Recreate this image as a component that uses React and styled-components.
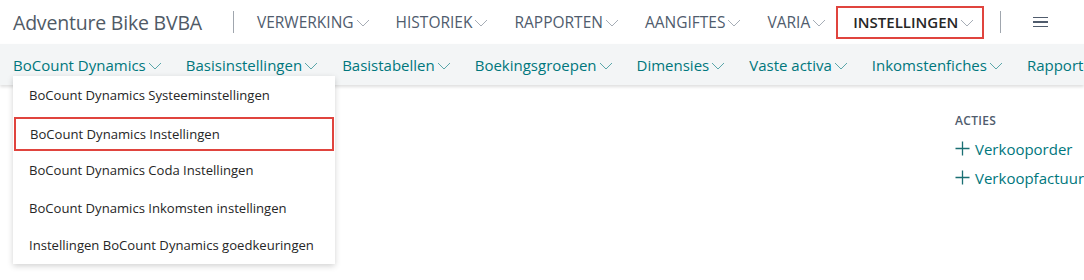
import React from 'react'
import styled, { createGlobalStyle } from 'styled-components'

const GlobalStyle = createGlobalStyle`
  body {
    margin: 0;
    background: #ffffff;
    font-family: "Open Sans", "Noto Sans", sans-serif;
    overflow: hidden;
  }
`

const Page = styled.div`
  position: relative;
  width: 1084px;
  height: 280px;
  overflow: hidden;
`

const TopBar = styled.div`
  height: 44px;
  display: flex;
  align-items: center;
  padding-left: 13px;
  background: #ffffff;
`

const Title = styled.div`
  font-size: 19.5px;
  color: #505a66;
  letter-spacing: -0.2px;
  white-space: nowrap;
`

const Divider = styled.div`
  width: 1px;
  height: 22px;
  background: #a0a6ae;
  margin: 0 ${p => p.$right}px 0 ${p => p.$left}px;
`

const TopItem = styled.div`
  display: flex;
  align-items: center;
  font-size: 15.5px;
  color: ${p => (p.$active ? '#262626' : '#505c6d')};
  font-weight: ${p => (p.$active ? 600 : 400)};
  white-space: nowrap;
  margin-right: 26px;
  ${p =>
    p.$active &&
    `
    border: 2px solid #e0443e;
    height: 33px;
    box-sizing: border-box;
    padding: 0 8px 0 15px;
    margin-left: -16px;
    margin-right: 0;
    font-size: 15px;
  `}
`

const Chevron = ({ color = '#a6adb6' }) => (
  <svg width="14" height="8" viewBox="0 0 14 8" style={{ marginLeft: 2, marginTop: 2 }}>
    <path d="M1 1 L7 7 L13 1" fill="none" stroke={color} strokeWidth="1" />
  </svg>
)

const Hamburger = styled.div`
  display: flex;
  flex-direction: column;
  gap: 3px;
  span {
    display: block;
    width: 15px;
    height: 1.5px;
    background: #505c6d;
  }
`

const SubBar = styled.div`
  height: 41px;
  display: flex;
  align-items: center;
  padding-left: 13px;
  background: #f3f5f6;
  box-shadow: 0 2px 3px rgba(0, 0, 0, 0.13);
  position: relative;
  z-index: 1;
`

const SubItem = styled.div`
  display: flex;
  align-items: center;
  font-size: 15px;
  color: #00777d;
  white-space: nowrap;
  margin-right: 24px;
`

const Content = styled.div`
  display: flex;
  padding: 27px 0 0 955px;
`

const Actions = styled.div`
  flex: 1;
  display: flex;
  flex-direction: column;
`

const ActionsTitle = styled.div`
  font-size: 12px;
  font-weight: 600;
  color: #505c6d;
  margin-bottom: 5px;
  letter-spacing: 0.3px;
`

const ActionLink = styled.div`
  display: flex;
  align-items: center;
  font-size: 15px;
  color: #00777d;
  height: 29px;
  white-space: nowrap;
`

const Plus = () => (
  <svg width="15" height="15" viewBox="0 0 15 15" style={{ marginRight: 5 }}>
    <path d="M7.5 0.5 V14.5 M0.5 7.5 H14.5" stroke="#1a6f73" strokeWidth="1.3" fill="none" />
  </svg>
)

const Dropdown = styled.div`
  position: absolute;
  left: 13px;
  top: 76px;
  width: 322px;
  background: #ffffff;
  box-shadow: 0 2px 6px rgba(0, 0, 0, 0.18);
  z-index: 5;
  display: flex;
  flex-direction: column;
`

const DropItem = styled.div`
  height: 37.6px;
  display: flex;
  align-items: center;
  padding-left: 16px;
  font-size: 13.1px;
  color: #262626;
  white-space: nowrap;
  box-sizing: border-box;
  ${p =>
    p.$highlight &&
    `
    border: 2px solid #e0443e;
    margin: 3px 1px 0 1px;
    padding-left: 14px;
    height: 34.6px;
  `}
`

const topMenu = ['VERWERKING', 'HISTORIEK', 'RAPPORTEN', 'AANGIFTES', 'VARIA']
const subMenu = [
  'BoCount Dynamics',
  'Basisinstellingen',
  'Basistabellen',
  'Boekingsgroepen',
  'Dimensies',
  'Vaste activa',
  'Inkomstenfiches',
  'Rapporten',
]
const dropItems = [
  'BoCount Dynamics Systeeminstellingen',
  'BoCount Dynamics Instellingen',
  'BoCount Dynamics Coda Instellingen',
  'BoCount Dynamics Inkomsten instellingen',
  'Instellingen BoCount Dynamics goedkeuringen',
]

export default function App() {
  return (
    <Page>
      <GlobalStyle />
      <TopBar>
        <Title>Adventure Bike BVBA</Title>
        <Divider $left={31} $right={23} />
        {topMenu.map(m => (
          <TopItem key={m}>
            {m}
            <Chevron />
          </TopItem>
        ))}
        <TopItem $active>
          INSTELLINGEN
          <Chevron />
        </TopItem>
        <Divider $left={16} $right={32} />
        <Hamburger>
          <span />
          <span />
          <span />
        </Hamburger>
      </TopBar>
      <SubBar>
        {subMenu.map(m => (
          <SubItem key={m}>
            {m}
            <Chevron color="#5aa6aa" />
          </SubItem>
        ))}
      </SubBar>
      <Content>
        <Actions>
          <ActionsTitle>ACTIES</ActionsTitle>
          <ActionLink>
            <Plus />
            Verkooporder
          </ActionLink>
          <ActionLink>
            <Plus />
            Verkoopfactuur
          </ActionLink>
        </Actions>
      </Content>
      <Dropdown>
        {dropItems.map((d, i) => (
          <DropItem key={d} $highlight={i === 1}>
            {d}
          </DropItem>
        ))}
      </Dropdown>
    </Page>
  )
}
